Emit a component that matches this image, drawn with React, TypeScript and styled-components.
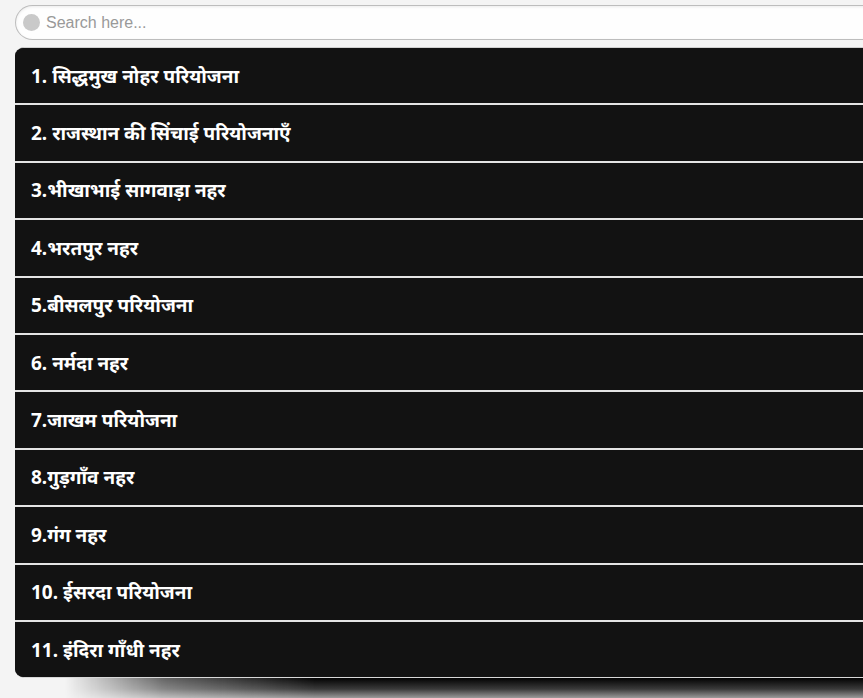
import * as React from 'react';
import styled, { createGlobalStyle } from 'styled-components';

const GlobalStyle = createGlobalStyle`
  html, body {
    margin: 0;
    padding: 0;
    background: #f4f4f4;
    overflow: hidden;
    font-family: "Noto Sans", "Liberation Sans", sans-serif;
  }
`;

const Page = styled.div({
  width: "880px",
  paddingLeft: "15px",
  paddingTop: "5px",
  boxSizing: "border-box",
});

const SearchBox = styled.div({
  height: "35px",
  display: "flex",
  alignItems: "center",
  gap: "6px",
  paddingLeft: "7px",
  boxSizing: "border-box",
  background: "#fefefe",
  border: "1px solid #bdbdbd",
  borderRight: "none",
  borderRadius: "18px 0 0 18px",
  boxShadow: "inset 0 1px 3px rgba(0,0,0,0.08)",
});

const Dot = styled.span({
  width: "17px",
  height: "17px",
  borderRadius: "50%",
  background: "#c9c9c9",
  flexShrink: 0,
});

const SearchInput = styled.input({
  flex: 1,
  border: "none",
  outline: "none",
  background: "transparent",
  fontFamily: '"Liberation Sans", Arial, sans-serif',
  fontSize: "16px",
  color: "#333",
  padding: 0,
  "&::placeholder": {
    color: "#999",
  },
});

const List = styled.ul({
  listStyle: "none",
  margin: "7px 0 0 0",
  padding: 0,
  borderTop: "1px solid #d0d0d0",
  borderBottom: "1px solid #d8d8d8",
  borderRadius: "9px 0 0 9px",
  overflow: "hidden",
  background: "#121212",
});

const Item = styled.li({
  height: "55.4px",
  display: "flex",
  alignItems: "center",
  paddingLeft: "16px",
  color: "#fff",
  fontSize: "19px",
  fontWeight: 700,
  background: "#121212",
  "& + &": {
    borderTop: "2px solid #e4e4e4",
  },
});

const Shadow = styled.div({
  height: "20px",
  background: "linear-gradient(to bottom, #020202 0%, #3a3a3a 55%, #9a9a9a 100%)",
  WebkitMaskImage: "linear-gradient(to right, transparent 50px, rgba(0,0,0,0.6) 150px, #000 300px)",
  maskImage: "linear-gradient(to right, transparent 50px, rgba(0,0,0,0.6) 150px, #000 300px)",
});

const items = [
  "1. सिद्धमुख नोहर परियोजना",
  "2. राजस्थान की सिंचाई परियोजनाएँ",
  "3.भीखाभाई सागवाड़ा नहर",
  "4.भरतपुर नहर",
  "5.बीसलपुर परियोजना",
  "6. नर्मदा नहर",
  "7.जाखम परियोजना",
  "8.गुड़गाँव नहर",
  "9.गंग नहर",
  "10. ईसरदा परियोजना",
  "11. इंदिरा गाँधी नहर",
];

export default function App() {
  return (
    <Page>
      <GlobalStyle />
      <SearchBox>
        <Dot />
        <SearchInput placeholder="Search here..." />
      </SearchBox>
      <List>
        {items.map((t) => (
          <Item key={t}>{t}</Item>
        ))}
      </List>
      <Shadow />
    </Page>
  );
}
